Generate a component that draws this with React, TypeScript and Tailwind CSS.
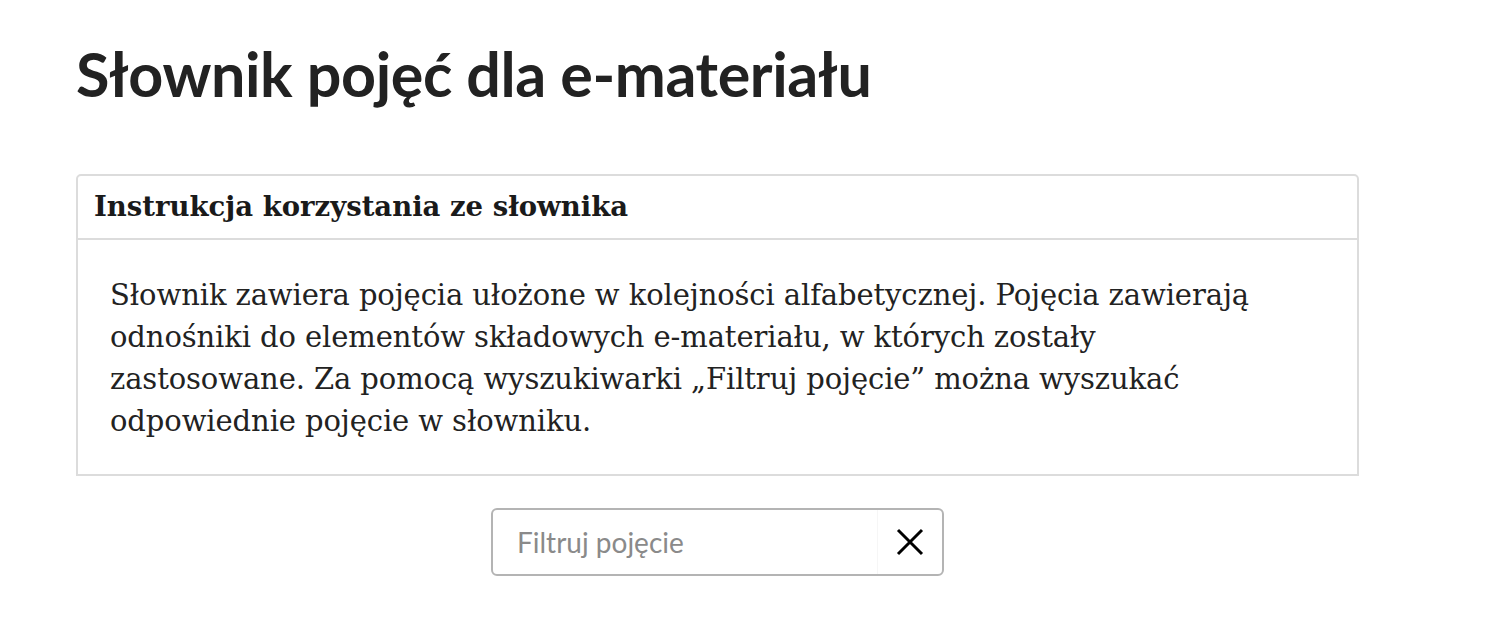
export default function App() {
  return (
    <div className="min-h-[622px] bg-white px-[76px] pt-[38px] text-[#1f1f1f]">
      <h1
        className="text-[61px] font-bold leading-[72px] tracking-[-0.4px] text-[#222]"
        style={{ fontFamily: "Lato, 'Noto Sans', sans-serif" }}
      >
        Słownik pojęć dla e-materiału
      </h1>

      <div className="mt-[64px] w-[1283px] rounded-t-[5px] border-2 border-[#dcdcdc]">
        <div className="flex h-[64px] items-center border-b-2 border-[#dcdcdc] px-[16px]">
          <h2
            className="text-[27.5px] font-bold text-[#1a1a1a]"
            style={{ fontFamily: "'DejaVu Serif', 'Liberation Serif', serif" }}
          >
            Instrukcja korzystania ze słownika
          </h2>
        </div>
        <p
          className="px-[32px] pb-[32px] pt-[34px] text-[29px] leading-[42px] tracking-[-0.1px] text-[#222]"
          style={{ fontFamily: "'DejaVu Serif', 'Liberation Serif', serif" }}
        >
          Słownik zawiera pojęcia ułożone w kolejności alfabetycznej. Pojęcia zawierają
          <br />
          odnośniki do elementów składowych e-materiału, w których zostały
          <br />
          zastosowane. Za pomocą wyszukiwarki „Filtruj pojęcie” można wyszukać
          <br />
          odpowiednie pojęcie w słowniku.
        </p>
      </div>

      <div className="mt-[32px] flex w-[1283px] justify-center">
        <div className="flex h-[68px] w-[453px] items-center rounded-[6px] border-2 border-[#b4b4b4]">
          <input
            placeholder="Filtruj pojęcie"
            className="h-full min-w-0 flex-1 rounded-l-[6px] border-r border-[#f6f6f6] bg-transparent px-[24px] text-[28px] text-[#222] outline-none placeholder:text-[#8a8a8a]"
            style={{ fontFamily: "Lato, 'Noto Sans', sans-serif" }}
          />
          <button className="flex h-full w-[64px] items-center justify-center">
            <svg width="30" height="30" viewBox="0 0 30 30" fill="none">
              <path d="M3 3 L27 27 M27 3 L3 27" stroke="#000" strokeWidth="3" />
            </svg>
          </button>
        </div>
      </div>
    </div>
  );
}
